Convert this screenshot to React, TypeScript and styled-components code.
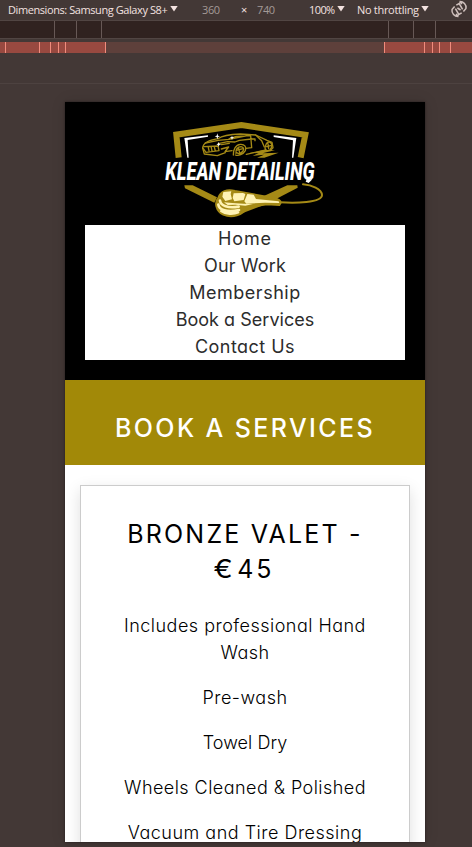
import React from "react";
import styled, { createGlobalStyle } from "styled-components";

const GlobalStyle = createGlobalStyle`
  * { box-sizing: border-box; }
  html, body { margin: 0; padding: 0; background: #433836; }
  body { overflow: hidden; }
`;

const Window = styled.div`
  display: flex;
  flex-direction: column;
  width: 472px;
  height: 847px;
  overflow: hidden;
  background: #433836;
`;

const Toolbar = styled.header`
  display: flex;
  align-items: center;
  height: 20px;
  padding-left: 8px;
  font-family: "Open Sans", "Noto Sans", sans-serif;
  font-size: 11px;
  line-height: 17px;
  white-space: nowrap;
  color: #f3e2e0;
`;

const ToolLabel = styled.span<{ $width: number; $muted?: boolean; $spacing?: number }>`
  flex: none;
  width: ${(p) => p.$width}px;
  height: 19px;
  letter-spacing: ${(p) => p.$spacing ?? -0.42}px;
  color: ${(p) => (p.$muted ? "#a39a97" : "#f3e2e0")};
`;

const Caret = styled.i<{ $after: number }>`
  flex: none;
  width: 8px;
  height: 6px;
  margin: 0 ${(p) => p.$after}px 3px 0;
  background: #f3e2e0;
  clip-path: polygon(0 0, 100% 0, 50% 100%);
`;

const RotateIcon = styled.svg`
  flex: none;
  width: 18px;
  height: 18px;
  margin-bottom: 2px;
`;

const RulerBar = styled.div`
  display: flex;
  justify-content: space-between;
  height: 19px;
  border-top: 1px solid #514543;
  border-bottom: 1px solid #514543;
  background: #302220;
`;

const BreakpointBar = styled.div`
  display: flex;
  height: 11px;
  margin-top: 3px;
  background: #5e403b;
  justify-content: space-between;
`;

const Ticks = styled.div`
  display: flex;
`;

const Segment = styled.div<{ $width: number; $side: "left" | "right"; $color: string; $fill?: string }>`
  width: ${(p) => p.$width}px;
  background: ${(p) => p.$fill ?? "transparent"};
  border-${(p) => p.$side}: 1px solid ${(p) => p.$color};
`;

const Stage = styled.main`
  display: flex;
  justify-content: center;
  margin-top: 30px;
  padding: 18px 0 0 18px;
  border-top: 1px solid #4d4240;
`;

const Device = styled.div`
  width: 360px;
  height: 740px;
  overflow: hidden;
  background: #fff;
  box-shadow: 0 0 2px rgba(20, 12, 12, 0.6), 0 0 14px rgba(20, 12, 12, 0.12);
  font-family: Inter, sans-serif;
  font-feature-settings: "cv11";
  text-align: center;
`;

const SiteHeader = styled.div`
  display: flex;
  flex-direction: column;
  align-items: center;
  height: 278px;
  padding: 20px;
  background: #000;
`;

const Logo = styled.svg`
  display: block;
  flex: none;
  width: 180px;
  height: 103px;
  overflow: visible;
`;

const Nav = styled.nav`
  width: 320px;
  background: #fff;
`;

const NavLink = styled.a<{ $spacing: number }>`
  display: block;
  height: 27px;
  font-size: 18px;
  line-height: 28px;
  letter-spacing: ${(p) => p.$spacing}px;
  color: #2c2c2c;
`;

const Banner = styled.div`
  height: 85px;
  padding-top: 30px;
  background: #a28908;
`;

const BannerTitle = styled.h1`
  margin: 0;
  font-size: 25px;
  font-weight: 500;
  line-height: 36px;
  letter-spacing: 2.4px;
  color: #fff;
`;

const Card = styled.section`
  height: 500px;
  margin: 20px 15px 0;
  padding-top: 31px;
  border: 1px solid #ccc;
  box-shadow: 0 5px 15px rgba(0, 0, 0, 0.13);
`;

const CardTitle = styled.h2`
  margin: 0 0 25px;
  font-size: 25px;
  font-weight: 400;
  line-height: 35px;
  color: #000;
`;

const TitleLine = styled.span<{ $spacing: number }>`
  display: block;
  letter-spacing: ${(p) => p.$spacing}px;
`;

const Euro = styled.span`
  display: inline-block;
  margin-right: 2px;
  transform: scaleX(1.15);
`;

const Service = styled.p<{ $spacing: number }>`
  width: 250px;
  margin: 0 auto 18px;
  font-size: 18px;
  font-weight: 300;
  line-height: 27px;
  letter-spacing: ${(p) => p.$spacing}px;
  color: #000;
`;

const links = [
  { label: "Home", spacing: 0.9 },
  { label: "Our Work", spacing: 0.15 },
  { label: "Membership", spacing: 0.5 },
  { label: "Book a Services", spacing: 0.03 },
  { label: "Contact Us", spacing: 0.45 },
];

const services = [
  { label: "Includes professional Hand Wash", spacing: 0.48 },
  { label: "Pre-wash", spacing: 0.5 },
  { label: "Towel Dry", spacing: 0.05 },
  { label: "Wheels Cleaned & Polished", spacing: 0.45 },
  { label: "Vacuum and Tire Dressing", spacing: 0.5 },
];

function KleanLogo() {
  return (
    <Logo viewBox="0 36 540 309" aria-label="Klean Detailing">
      <g fill="none" stroke="#a58a16" strokeLinecap="round" strokeLinejoin="round">
        <path d="M71 143 64 74 259 45 451 74 437 143" strokeWidth="18" strokeLinecap="butt" strokeLinejoin="miter" />
        <path d="M88 226H113L186 262 178 278 90 235Z" fill="#a58a16" stroke="none" />
        <path d="M397 226H427L428 233 333 283 240 318 219 307Z" fill="#a58a16" stroke="none" />
        <path d="M374 277C419 280 501 279 501 255 500 237 470 225 444 223" strokeWidth="6" />
        <g strokeWidth="4">
          <path d="M143 114C144 99 164 90 189 86 204 75 230 73 256 72L302 75 336 91 351 97 354 113 345 122" />
          <path d="M143 114 148 132 187 137 211 128M189 91 222 88 285 75M190 101 218 95 240 96 253 91 290 87M222 87 244 79 287 77 290 113 273 115M302 75 320 92 328 111" />
          <path d="M146 110 189 108 192 122 153 127 145 116M160 113 162 122M169 112 171 123M178 111 181 123M199 117 221 111 210 125 231 122M151 99 190 91M199 104 223 100" />
          <path d="M235 135C234 119 242 104 256 103 269 102 276 112 271 122 265 133 250 139 241 135M243 130C241 118 248 110 258 110 266 111 268 117 264 123 258 130 251 132 246 128M250 112 254 128M244 121 264 116" />
          <path d="M330 119C330 104 336 95 343 96 353 99 353 112 345 119 339 124 333 122 331 116M339 101 341 116M335 110 350 106" />
          <path d="M274 133 326 121M290 87H300V92" />
        </g>
        <path d="M280 130 327 120 360 120 323 130 371 128 328 143H306L327 134 293 138 311 129Z" fill="#a58a16" stroke="none" />
        <path d="M190 264C196 243 217 237 240 243L355 264Q377 268 377 278L373 285 336 283 277 292C263 316 231 325 205 314 182 303 178 277 190 264Z" fill="#a58a16" strokeWidth="6" />
      </g>
      <path d="M101 143H97L88 84 159 76V80L98 90ZM356 76 424 84 415 143H411L414 91 356 81Z" fill="#fff" />
      <path d="M187 70 189 77 195 79 189 81 187 88 185 81 179 79 185 77ZM231 77 233 82 238 83 233 85 231 90 229 85 224 83 229 82ZM191 96 193 101 198 103 193 105 191 110 189 105 184 103 189 101Z" fill="#fff" />
      <text
        x="31"
        y="210"
        fill="#fff"
        fontFamily="Roboto, sans-serif"
        fontSize="77"
        fontWeight="800"
        fontStyle="italic"
        textLength="448"
        lengthAdjust="spacingAndGlyphs"
      >
        KLEAN DETAILING
      </text>
      <path d="M455 208H472L461 219 452 215Z" fill="#fff" />
      <g fill="#fff3b5">
        <path d="M205 246 229 244 227 252 231 268 211 273 202 260ZM236 250 264 249 271 252 266 270 238 274 233 264ZM277 252 296 254 303 267 371 274 373 279 330 278 274 281 268 274Z" />
        <path d="M207 277 232 279 265 281 294 282 271 287 241 284 218 285Z" />
      </g>
      <g fill="none" stroke="#fff3b5" strokeLinecap="round" strokeWidth="8">
        <path d="M195 272C197 288 219 295 251 290M190 284C192 300 216 308 252 300M199 303C212 313 236 313 249 307" />
      </g>
    </Logo>
  );
}

export default function App() {
  return (
    <>
      <GlobalStyle />
      <Window>
        <Toolbar>
          <ToolLabel $width={162}>Dimensions: Samsung Galaxy S8+</ToolLabel>
          <Caret $after={24} />
          <ToolLabel $width={39} $muted $spacing={-0.4}>360</ToolLabel>
          <ToolLabel $width={16}>×</ToolLabel>
          <ToolLabel $width={52} $muted $spacing={-0.4}>740</ToolLabel>
          <ToolLabel $width={28} $spacing={-0.6}>100%</ToolLabel>
          <Caret $after={12} />
          <ToolLabel $width={64} $spacing={-0.3}>No throttling</ToolLabel>
          <Caret $after={21} />
          <RotateIcon viewBox="0 0 18 18" fill="none" stroke="#cfc0bd" strokeWidth="1.5">
            <path d="M6.3 5.2 9.2 3.6 12.6 9.4M11.7 12.8 8.8 14.4 5.4 8.6M7.4 8 10.6 10" />
            <path d="M9.5 1.6C13.5 1.4 16.6 4.6 16 8.6M16 8.6 13.4 11.5M8.5 16.4C4.5 16.6 1.4 13.4 2 9.4M2 9.4 4.6 6.5M9.5 1.6 12 4M8.5 16.4 6 14" />
          </RotateIcon>
        </Toolbar>
        <RulerBar>
          <Ticks>
            {[55, 22, 25].map((w, i) => (
              <Segment key={i} $width={w} $side="right" $color="#675856" />
            ))}
          </Ticks>
          <Ticks>
            {[25, 22, 37].map((w, i) => (
              <Segment key={i} $width={w} $side="left" $color="#675856" />
            ))}
          </Ticks>
        </RulerBar>
        <BreakpointBar>
          <Ticks>
            {[6, 34, 11, 8, 7, 40].map((w, i) => (
              <Segment key={i} $width={w} $side="right" $color="#f08c7d" $fill="#984940" />
            ))}
          </Ticks>
          <Ticks>
            {[40, 8, 7, 11, 22].map((w, i) => (
              <Segment key={i} $width={w} $side="left" $color="#f08c7d" $fill="#984940" />
            ))}
          </Ticks>
        </BreakpointBar>
        <Stage>
          <Device>
            <SiteHeader>
              <KleanLogo />
              <Nav>
                {links.map((l) => (
                  <NavLink key={l.label} $spacing={l.spacing}>{l.label}</NavLink>
                ))}
              </Nav>
            </SiteHeader>
            <Banner>
              <BannerTitle>BOOK A SERVICES</BannerTitle>
            </Banner>
            <Card>
              <CardTitle>
                <TitleLine $spacing={2.2}>BRONZE VALET -</TitleLine>
                <TitleLine $spacing={3}><Euro>€</Euro>45</TitleLine>
              </CardTitle>
              {services.map((s) => (
                <Service key={s.label} $spacing={s.spacing}>{s.label}</Service>
              ))}
            </Card>
          </Device>
        </Stage>
      </Window>
    </>
  );
}
